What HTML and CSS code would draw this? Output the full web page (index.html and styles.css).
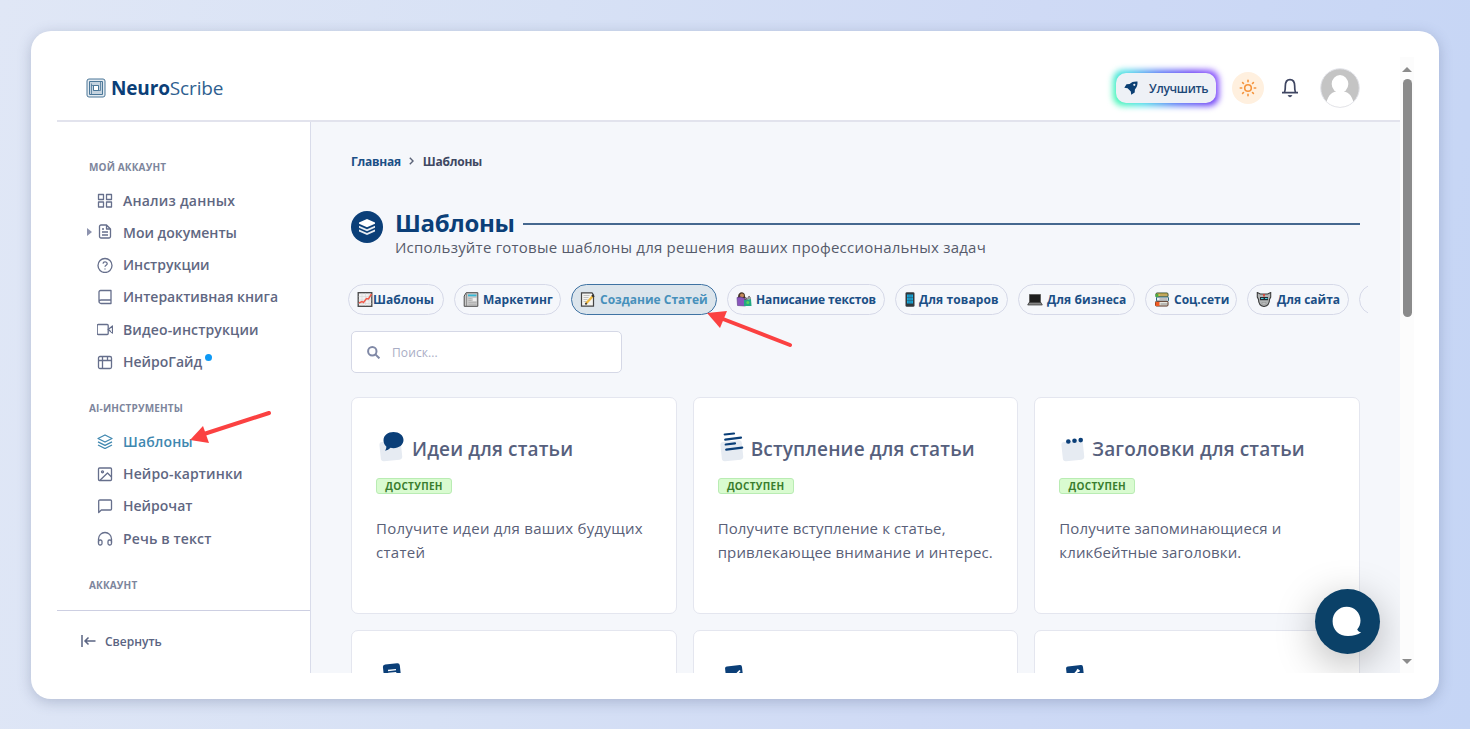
FILE: index.html
```html
<!DOCTYPE html>
<html lang="ru">
<head>
  <meta charset="UTF-8">
  <meta name="viewport" content="width=device-width, initial-scale=1.0">
  <title>NeuroScribe - Шаблоны</title>
  <link rel="stylesheet" href="styles.css">
</head>
<body>
  <div class="window">
    <div class="app">
      <header class="header">
        <div class="logo">
          <svg class="logo-icon" viewBox="0 0 20 20" fill="none" stroke="#4b7798" stroke-width="1">
            <rect x="1" y="1" width="18" height="18" rx="2" fill="#e4ebf1"/>
            <path d="M3.500 3.500h13v13h-13z" fill="#c5d3df"/>
            <path d="M7.500 7.500h5v5h-5z" fill="#fff"/>
            <path d="M5.500 5.500v11M7.500 12.500h7M12.500 7.500h-7M14.500 3.500v9" stroke-width=".8"/>
          </svg>
          <div class="logo-text"><b>Neuro</b>Scribe</div>
        </div>
        <div class="header-actions">
          <button class="upgrade">
            <svg width="14" height="14" viewBox="0 0 14 14" fill="#0b3f73"><path fill-rule="evenodd" d="M13.500.5C10 .3 7.500 1 5.600 3L2.500 3.200.3 6.700l3.300.5 3.200 3.200.4 3.300 3.500-2.200.2-3.100C12.900 6.500 13.700 4 13.500.5zM10.300 2.700a1.100 1.100 0 1 1 0 2.200 1.100 1.100 0 0 1 0-2.200z"/></svg>
            <span>Улучшить</span>
          </button>
          <div class="theme">
            <svg width="18" height="18" viewBox="0 0 18 18" fill="none" stroke="#f5943d" stroke-width="1.600" stroke-linecap="round"><circle cx="9" cy="9" r="3.300"/><path d="M9 1.300v1.400M9 15.300v1.400M1.300 9h1.400M15.300 9h1.400M3.600 3.600l.9.900M13.500 13.500l.9.900M3.600 14.400l.9-.9M13.500 4.500l.9-.9"/></svg>
          </div>
          <svg class="bell" width="18" height="20" viewBox="0 0 18 20" fill="none" stroke="#3f4662" stroke-width="1.700" stroke-linejoin="round"><path d="M1 14.700h16M3.200 14.500c.9-1 1.100-2.300 1.100-6.200C4.300 4 6.200 1.700 9 1.700s4.700 2.300 4.700 6.600c0 3.900.2 5.200 1.100 6.200"/><path d="M7.200 17.500h3.600c-.5 1.700-3.100 1.700-3.600 0z" fill="#3f4662" stroke-width=".8"/></svg>
          <svg class="avatar" width="40" height="40" viewBox="0 0 40 40"><defs><clipPath id="av"><circle cx="20" cy="20" r="19"/></clipPath></defs><circle cx="20" cy="20" r="19.300" fill="#c4c4c4" stroke="#e3e4ea"/><g clip-path="url(#av)" fill="#fff"><ellipse cx="20" cy="16" rx="8.300" ry="9"/><path d="M16 22h8v1.500c5 1 9.500 5 10.500 16.500h-29C6.500 28.500 11 24.500 16 23.500z"/></g></svg>
        </div>
      </header>

      <aside class="sidebar">
        <nav class="menu">
          <div class="menu-title">МОЙ АККАУНТ</div>
          <a class="menu-item"><svg viewBox="0 0 16 16"><path d="M1.500 2.500h5v5h-5zM9.500 2.500h5v5h-5zM1.500 10h5v5h-5zM9.500 10h5v5h-5z"/></svg><span class="wider">Анализ данных</span></a>
          <a class="menu-item"><i class="caret"></i><svg viewBox="0 0 16 16"><path d="M9.500 1H4a1.500 1.500 0 0 0-1.500 1.500v10A1.500 1.500 0 0 0 4 14h8a1.500 1.500 0 0 0 1.500-1.500V5zM9.500 1v4h4M5 5h2M5 8h6M5 11h6"/></svg><span>Мои документы</span></a>
          <a class="menu-item"><svg viewBox="0 0 16 16"><circle cx="8" cy="8.500" r="7"/><path d="M6 6.700c.3-2.500 4.200-2.200 4.200.1 0 1.500-2.200 1.500-2.200 3M8 11.500v1"/></svg><span>Инструкции</span></a>
          <a class="menu-item"><svg viewBox="0 0 16 16"><path d="M3.500 1.500H14v13H4A2 2 0 0 1 2 12.500V3a1.500 1.500 0 0 1 1.500-1.500zM2 12.500a2 2 0 0 1 2-1.500h10"/></svg><span>Интерактивная книга</span></a>
          <a class="menu-item"><svg viewBox="0 0 16 16"><rect x=".2" y="3.500" width="11" height="10" rx="1"/><path d="M11.200 8.500l4.300-3.500v7z"/></svg><span class="wide">Видео-инструкции</span></a>
          <a class="menu-item"><svg viewBox="0 0 16 16"><rect x="1.500" y="2.500" width="13" height="12" rx="1.500"/><path d="M5.500 2.500v12M10.500 2.500v4M1.500 6.500h13"/></svg><span>НейроГайд</span><i class="dot"></i></a>
        </nav>
        <nav class="menu">
          <div class="menu-title">AI-ИНСТРУМЕНТЫ</div>
          <a class="menu-item active"><svg viewBox="0 0 16 16"><path d="M8 2l7 3.500L8 9 1 5.500zM1 8.800l7 3.500 7-3.500M1 12l7 3.500 7-3.500"/></svg><span class="wide">Шаблоны</span></a>
          <a class="menu-item"><svg viewBox="0 0 16 16"><rect x="1.500" y="2" width="13" height="12.500" rx="1"/><circle cx="5.500" cy="5.800" r="1"/><path d="M3 14.300L10.500 7l4 4"/></svg><span class="wide">Нейро-картинки</span></a>
          <a class="menu-item"><svg viewBox="0 0 16 16"><path d="M3 2h10.500a1 1 0 0 1 1 1v8a1 1 0 0 1-1 1H4.300L1.700 14.500V3.200A1.200 1.200 0 0 1 3 2z"/></svg><span>Нейрочат</span></a>
          <a class="menu-item"><svg viewBox="0 0 16 16"><path d="M1.500 12.500V9a6.500 6.500 0 0 1 13 0v3.500"/><rect x="1.500" y="10" width="3.500" height="5" rx="1.500"/><rect x="11" y="10" width="3.500" height="5" rx="1.500"/></svg><span class="wide">Речь в текст</span></a>
        </nav>
        <div class="menu-title">АККАУНТ</div>
        <div class="collapse">
          <svg width="15" height="12" viewBox="0 0 15 12" fill="none" stroke="#5a6482" stroke-width="1.500"><path d="M1 0v12M14.500 6H4M7.500 2.500L4 6l3.500 3.500"/></svg>
          <span>Свернуть</span>
        </div>
      </aside>

      <main class="main">
        <div class="breadcrumbs">
          <a>Главная</a>
          <svg width="5" height="8" viewBox="0 0 5 8" fill="none" stroke="#5b6377" stroke-width="1.400"><path d="M.8.8L4 4 .8 7.200"/></svg>
          <span>Шаблоны</span>
        </div>

        <div class="page-head">
          <div class="page-icon">
            <svg width="18" height="18" viewBox="0 0 18 18" fill="#fff"><path d="M9 1l8 3.500v1.300L9 9.300 1 5.800V4.500z"/><path d="M1 7.800l8 3.500 8-3.500v1.900l-8 3.500-8-3.500zM1 11.600l8 3.500 8-3.500v1.900L9 17l-8-3.500z" opacity=".9"/></svg>
          </div>
          <div class="page-info">
            <div class="page-title"><h1>Шаблоны</h1><div class="line"></div></div>
            <p>Используйте готовые шаблоны для решения ваших профессиональных задач</p>
          </div>
        </div>

        <div class="tabs">
          <div class="tab tab-1"><svg viewBox="0 0 15 15"><rect x=".7" y=".7" width="13.600" height="13.600" fill="#f1f1f1" stroke="#444" stroke-width="1.300"/><path d="M4.500 1v13M8 1v13M11.500 1v13M1 4.500h13M1 8h13M1 11.500h13" stroke="#d0d0d0" stroke-width=".5"/><path d="M1.500 11l3-1.500 1.500 1 3-4 2 .5L14 2" fill="none" stroke="#f05a4a" stroke-width="1.500"/></svg><span>Шаблоны</span></div>
          <div class="tab tab-2"><svg viewBox="0 0 15 15"><path d="M.7 4l2-3.300h11.600v13.600H.7z" fill="#c9c9c9" stroke="#4c4c4c"/><path d="M3 1.500V14" stroke="#777" stroke-width=".7"/><path d="M4.500 2.500h8.500v1.800H4.500z" fill="#35b8d6"/><path d="M5 6.500h3M5 8.500h3M5 10.500h8M5 12.300h8" stroke="#aaa" stroke-width=".7"/><path d="M9.300 6H13v3H9.300z" fill="#eee"/></svg><span>Маркетинг</span></div>
          <div class="tab tab-3 selected"><svg viewBox="0 0 15 15"><path d="M1 .8h10.500L13 3v11.200H1z" fill="#f4f4f0" stroke="#444" stroke-width="1.200"/><path d="M3 3.500h6M3 5.500h5M3 7.500h4M3 9.500h3" stroke="#aaa" stroke-width=".7"/><path d="M5.500 11.500L12.500 4" stroke="#efb83c" stroke-width="2.300"/><path d="M11.500 3l2 2M4.800 12.300l1.500-1" stroke="#333" stroke-width="1.800"/></svg><span>Создание Статей</span></div>
          <div class="tab tab-4"><svg viewBox="0 0 16 15"><path d="M2 5c0-6 7-6 7-1v2H2z" fill="#463425"/><circle cx="6" cy="3.500" r="2" fill="#c48a5a"/><path d="M1 5.500l4-.5 4.500 2V14l-8-.5z" fill="#8956bd" stroke="#56327f" stroke-width=".6"/><path d="M8 8l7-1 .5 7H8z" fill="#23a982"/><path d="M9 8c0-4 1.500-3 2 0M12 7c0-4 2.500-3 2 0" fill="none" stroke="#444"/><circle cx="11.800" cy="10.500" r="1.500" fill="#5ad45a"/></svg><span>Написание текстов</span></div>
          <div class="tab tab-5"><svg viewBox="0 0 10 15"><rect x=".5" y=".2" width="9" height="14.600" rx="1.300" fill="#30373c"/><path d="M2 2.500h6v9H2z" fill="#15a9dc"/><path d="M4 2.500v9M6 2.500v9M2 5.500h6M2 8.500h6" stroke="#28506b" stroke-width=".5"/></svg><span>Для товаров</span></div>
          <div class="tab tab-6"><svg viewBox="0 0 15 15"><path d="M2 2.500h11v8H2z" fill="#1e1e1e" stroke="#606060"/><path d="M1.500 10.500h12l1.300 2.500H.2z" fill="#858585" stroke="#333" stroke-width=".7"/></svg><span>Для бизнеса</span></div>
          <div class="tab tab-7"><svg viewBox="0 0 15 15"><rect x="1.500" y="1" width="12" height="4" rx="1" fill="#f3c64a" stroke="#374f37"/><rect x="2" y="5" width="12" height="4.300" rx="1" fill="#e9edf0" stroke="#25657e"/><rect x="1" y="9.300" width="12.500" height="4.700" rx="1" fill="#e6e6df" stroke="#55301f"/><path d="M1 2h3v3H1z" fill="#4caa43"/><path d="M1 10h4v4H1z" fill="#f15b23"/><path d="M5 3h8M5 7h8M6 12h7" stroke="#777" stroke-width=".8"/></svg><span>Соц.сети</span></div>
          <div class="tab tab-8"><svg viewBox="0 0 15 15"><path d="M.8.500l3 1.500h7.400l3-1.500v4.500l-1.200 2.500c0 4-2 6.500-5.500 7-3.500-.5-5.500-3-5.500-7L.8 5z" fill="#b2b5b5" stroke="#3c3c3c" stroke-width="1.100"/><path d="M3.500 5h8v3.200h-8z" fill="#242a31"/><path d="M4.500 6.500H7M8.500 6.500H11" stroke="#46d0df" stroke-width="1.200"/><path d="M7.500 2v2.500" stroke="#e33b2e" stroke-width="1.600"/><path d="M5.500 10.500h4v1.300h-4z" fill="#eee" stroke="#666" stroke-width=".4"/></svg><span>Для сайта</span></div>
          <div class="tab tab-9"></div>
        </div>

        <div class="search">
          <svg width="13" height="13" viewBox="0 0 13 13" fill="none" stroke="#8089a6" stroke-width="2"><circle cx="5.300" cy="5.300" r="4.200"/><path d="M8.400 8.400l4 4"/></svg>
          <input type="text" placeholder="Поиск...">
        </div>

        <div class="cards">
          <div class="card card-ideas">
            <div class="card-title">
              <svg viewBox="0 0 26 30"><rect x="2" y="9" width="21.500" height="19.500" rx="3" transform="rotate(-6 13 18)" fill="#e6ebf2"/><path d="M15.500 0C21 0 25.500 3.200 25.500 8s-4.500 8.200-10 8.200c-1.100 0-2-.1-3-.4-1.500 1.600-3.300 2.500-5.500 2.900 1-1.200 1.400-2.500 1.300-4.200C6.500 13 5.500 10.700 5.500 8.200 5.500 3.200 10 0 15.500 0z" fill="#0b3f78"/></svg>
              <h2>Идеи для статьи</h2>
            </div>
            <div class="badge">ДОСТУПЕН</div>
            <p>Получите идеи для ваших будущих статей</p>
          </div>
          <div class="card">
            <div class="card-title">
              <svg viewBox="0 0 26 30"><rect x="2" y="9" width="21.500" height="19.500" rx="3" transform="rotate(-6 13 18)" fill="#e6ebf2"/><path d="M5.700 2.500L15 1.500M6.200 7.700l15.800-2M6.700 12.500l9.300-1.200M7.200 17.700l16-2" stroke="#0b3f78" stroke-width="2.200" stroke-linecap="round"/></svg>
              <h2>Вступление для статьи</h2>
            </div>
            <div class="badge">ДОСТУПЕН</div>
            <p>Получите вступление к статье, привлекающее внимание и интерес.</p>
          </div>
          <div class="card">
            <div class="card-title">
              <svg viewBox="0 0 26 30"><rect x="2" y="9" width="21.500" height="19.500" rx="3" transform="rotate(-6 13 18)" fill="#e6ebf2"/><g fill="#0b3f78"><circle cx="8.300" cy="9.500" r="2.300"/><circle cx="14.500" cy="8.800" r="2.300"/><circle cx="20.700" cy="8.100" r="2.300"/></g></svg>
              <h2>Заголовки для статьи</h2>
            </div>
            <div class="badge">ДОСТУПЕН</div>
            <p>Получите запоминающиеся и кликбейтные заголовки.</p>
          </div>
          <div class="card">
            <div class="card-title"><svg viewBox="0 0 26 30"><rect x="7" y="-1" width="17" height="24" rx="2.500" transform="rotate(-6 13 12)" fill="#0b3f78"/><path d="M11 5.500l8-.8M11.300 8.500l8-.8" stroke="#fff" stroke-width="1.300"/></svg></div>
          </div>
          <div class="card">
            <div class="card-title"><svg viewBox="0 0 26 30"><rect x="7" y="1" width="17" height="22" rx="2" transform="rotate(-6 13 12)" fill="#0b3f78"/><path d="M13 10l2 2 6-6.500" stroke="#fff" stroke-width="1.800" fill="none"/></svg></div>
          </div>
          <div class="card">
            <div class="card-title"><svg viewBox="0 0 26 30"><rect x="7" y="1" width="17" height="22" rx="2" transform="rotate(-6 13 12)" fill="#0b3f78"/><path d="M12 12l6-6.500M17 4.500l2.500 2" stroke="#fff" stroke-width="2" fill="none"/></svg></div>
          </div>
        </div>

        <div class="chat">
          <svg width="30" height="31" viewBox="0 0 30 31"><path d="M14.700.7C22.500.7 28.500 6.800 28.500 14.500c0 3.600-1.200 6.500-3.300 8.900.8 1.700 2.100 2.500 4 2.900-3.500 2.500-7.500 3.700-13.200 3.700C7 30 .6 24 .6 15.200.6 7 6.900.7 14.700.7z" fill="#fff"/></svg>
        </div>
      </main>

      <div class="scrollbar">
        <i class="arrow-up"></i>
        <div class="thumb"></div>
        <i class="arrow-down"></i>
      </div>
    </div>
  </div>

  <svg class="pointer pointer-menu" width="84" height="36" viewBox="0 0 84 36"><path d="M81 4L16 25" stroke="#fb4141" stroke-width="4" stroke-linecap="round"/><path d="M2 31L15 17l6 17z" fill="#fb4141"/></svg>
  <svg class="pointer pointer-tab" width="88" height="40" viewBox="0 0 88 40"><path d="M84 36L17 10" stroke="#fb4141" stroke-width="4" stroke-linecap="round"/><path d="M1 4l20-2-7 17z" fill="#fb4141"/></svg>
</body>
</html>
```
FILE: styles.css
```css
* {
  box-sizing: border-box;
}

body {
  margin: 0;
  height: 729px;
  padding: 31px 31px 30px;
  overflow: hidden;
  font-family: "Open Sans", "Noto Sans", sans-serif;
  background: linear-gradient(100deg, #e0e7f6 0%, #d7e1f5 35%, #cfdaf5 65%, #c5d5f5 100%);
}

.window {
  width: 1408px;
  height: 668px;
  padding: 26px;
  background-color: #fff;
  border-radius: 20px;
  box-shadow: 0 3px 14px rgba(60, 75, 115, 0.27);
}

.app {
  display: grid;
  grid-template-columns: 254px 1089px 14px;
  grid-template-rows: 65px 551px;
  width: 1357px;
  height: 616px;
}

/* header */
.header {
  grid-column: 1 / 3;
  display: flex;
  justify-content: space-between;
  align-items: center;
  padding: 0 40px 1px 29px;
  border-bottom: 2px solid #e2e3ed;
}

.logo {
  display: flex;
  align-items: center;
  gap: 5px;
}

.logo-icon {
  width: 20px;
  height: 20px;
}

.logo-text {
  font-size: 19px;
  letter-spacing: -0.15px;
  color: #2f5f90;
}

.logo-text b {
  color: #0b3f78;
}

.header-actions {
  display: flex;
  align-items: center;
}

.upgrade {
  position: relative;
  display: flex;
  align-items: center;
  gap: 11px;
  width: 100px;
  height: 30px;
  padding: 0 0 0 8px;
  border: none;
  border-radius: 9px;
  background-color: #eef1f6;
  color: #1b4776;
  font: 600 12px "Open Sans", sans-serif;
  letter-spacing: -0.3px;
  z-index: 0;
}

/* rainbow glow round the button */
.upgrade::before,
.upgrade::after {
  content: "";
  position: absolute;
  border-radius: 10px;
  z-index: -1;
}

.upgrade::before {
  inset: -3px;
  background: linear-gradient(60deg, #3fffa5 0%, #45dce8 25%, #4f70f5 52%, #683cf5 78%, #955cff 100%);
  filter: blur(3px);
}

.upgrade::after {
  inset: 0;
  background-color: #eef1f6;
}

.theme {
  display: flex;
  align-items: center;
  justify-content: center;
  width: 32px;
  height: 32px;
  margin-left: 16px;
  border-radius: 50%;
  background-color: #fff0df;
}

.bell {
  margin-left: 17px;
}

.avatar {
  margin-left: 21px;
}

/* sidebar */
.sidebar {
  display: flex;
  flex-direction: column;
  padding-top: 37px;
  border-right: 1px solid #d9dcea;
}

.menu {
  margin-bottom: 22.5px;
}

.menu-title {
  height: 16px;
  padding-left: 32px;
  font-size: 10px;
  font-weight: 700;
  line-height: 16px;
  letter-spacing: 0.15px;
  color: #7d859c;
}

.menu .menu-title {
  margin-bottom: 8.9px;
}

.menu-item {
  position: relative;
  display: flex;
  align-items: center;
  height: 32.3px;
  padding-left: 40px;
  font-size: 14px;
  font-weight: 600;
  color: #5f6782;
}

.menu-item svg {
  width: 16px;
  height: 16px;
  margin-right: 10px;
  fill: none;
  stroke: #666f8c;
  stroke-width: 1.3;
  stroke-linejoin: round;
}

.menu-item .wide {
  letter-spacing: 0.13px;
}

.menu-item .wider {
  letter-spacing: 0.22px;
}

.menu-item.active {
  color: #4088b0;
}

.menu-item.active svg {
  stroke: #4088b0;
}

.caret {
  position: absolute;
  left: 30px;
  border-left: 5px solid #8d93ae;
  border-top: 4px solid transparent;
  border-bottom: 4px solid transparent;
}

.dot {
  width: 7px;
  height: 7px;
  margin: -8px 0 0 3px;
  border-radius: 50%;
  background-color: #0d99f5;
}

.collapse {
  display: flex;
  align-items: center;
  gap: 9px;
  height: 63px;
  margin-top: auto;
  padding: 0 0 2px 24px;
  border-top: 1px solid #cdcfe2;
  font-size: 12px;
  font-weight: 600;
  color: #5a6482;
}

/* content */
.main {
  position: relative;
  padding: 29px 40px 0;
  overflow: hidden;
  background-color: #f5f7fb;
}

.breadcrumbs {
  display: flex;
  align-items: center;
  gap: 8.5px;
  height: 20px;
  font-size: 12px;
  font-weight: 700;
  letter-spacing: -0.25px;
  color: #3f4862;
}

.breadcrumbs a {
  color: #1b4f86;
}

.page-head {
  display: flex;
  gap: 12px;
  margin-top: 39px;
}

.page-icon {
  display: flex;
  align-items: center;
  justify-content: center;
  width: 32px;
  height: 32px;
  margin-top: 1px;
  border-radius: 50%;
  background-color: #0b3f78;
}

.page-info {
  flex: 1;
}

.page-title {
  display: flex;
  align-items: center;
  height: 28px;
}

.page-title h1 {
  width: 128px;
  margin: 0;
  padding-bottom: 2px;
  font-size: 24px;
  line-height: 26px;
  letter-spacing: -0.35px;
  color: #0b3f78;
}

.line {
  flex: 1;
  height: 2px;
  background-color: #45688f;
}

.page-info p {
  margin: -1px 0 1px;
  font-size: 15px;
  line-height: 20px;
  letter-spacing: 0.22px;
  color: #555b6b;
  white-space: nowrap;
}

.tabs {
  display: flex;
  gap: 10px;
  height: 31px;
  margin: 26px -8px 0 -3px;
  overflow: hidden;
}

.tab {
  display: flex;
  flex: none;
  align-items: center;
  gap: 4px;
  padding-left: 8px;
  border: 1px solid #d6d9e8;
  border-radius: 16px;
  font-size: 12px;
  font-weight: 700;
  color: #1b4f86;
  white-space: nowrap;
}

.tab svg {
  width: 16px;
  height: 15px;
}

.tab.selected {
  border-color: #3f73a3;
  background-color: #dce5ec;
  color: #4790bb;
}

.tab-1 { width: 96px; gap: 0; }
.tab-2 { width: 107px; }
.tab-3 { width: 146px; }
.tab-4 { width: 158px; letter-spacing: -0.12px; }
.tab-5 { width: 113px; gap: 1px; padding-left: 6px; letter-spacing: 0.1px; }
.tab-6 { width: 117px; letter-spacing: 0.1px; }
.tab-7 { width: 92px; }
.tab-8 { width: 102px; gap: 5px; }
.tab-9 { width: 102px; }

.search {
  display: flex;
  align-items: center;
  gap: 12px;
  width: 271px;
  height: 42px;
  margin-top: 16px;
  padding-left: 15px;
  border: 1px solid #d5d8e6;
  border-radius: 5px;
  background-color: #fff;
}

.search input {
  width: 200px;
  padding: 0;
  border: none;
  outline: none;
  font: 12px "Open Sans", sans-serif;
  letter-spacing: 0.1px;
}

.search input::placeholder {
  color: #a9adc5;
}

.cards {
  display: grid;
  grid-template-columns: repeat(3, 1fr);
  grid-auto-rows: 217px;
  gap: 16px;
  margin-top: 24px;
}

.card {
  padding: 34px 24px 0;
  border: 1px solid #e4e6ef;
  border-radius: 7px;
  background-color: #fff;
}

.card-title {
  display: flex;
  height: 30px;
}

.card-title svg {
  width: 26px;
  height: 30px;
  margin: 0 6px 0 1px;
  overflow: visible;
}

.card-title h2 {
  margin: 0;
  padding-top: 4px;
  font-size: 19px;
  font-weight: 600;
  line-height: 26px;
  letter-spacing: 0.15px;
  color: #56607d;
  white-space: nowrap;
}

.badge {
  width: 76px;
  height: 16px;
  margin-top: 16px;
  border: 1px solid #b9ecb3;
  border-radius: 3px;
  background-color: #d9fbd0;
  font-size: 10px;
  font-weight: 700;
  line-height: 15px;
  letter-spacing: 0.3px;
  text-align: center;
  color: #3a7d2e;
}

.card p {
  margin: 22px 0 0;
  font-size: 15px;
  line-height: 24px;
  letter-spacing: 0.12px;
  color: #596078;
}

.card-ideas .card-title svg {
  margin: 0 8px 0 2px;
}

.card-ideas p {
  letter-spacing: 0.27px;
}

.chat {
  position: absolute;
  right: 20px;
  bottom: 19px;
  display: flex;
  align-items: center;
  justify-content: center;
  width: 65px;
  height: 65px;
  border-radius: 50%;
  background-color: #0b4168;
  box-shadow: 0 10px 40px rgba(0, 0, 0, 0.28);
}

.chat svg {
  margin-right: 2px;
}

/* scrollbar */
.scrollbar {
  grid-column: 3;
  grid-row: 1 / 3;
  display: flex;
  flex-direction: column;
  align-items: center;
  padding: 10px 0 9px;
  background-color: #fcfcfc;
}

.arrow-up {
  border: 5px solid transparent;
  border-top: none;
  border-bottom-color: #8b8b8b;
}

.thumb {
  width: 9px;
  height: 238px;
  margin-top: 7px;
  border-radius: 5px;
  background-color: #8b8b8b;
}

.arrow-down {
  margin-top: auto;
  border: 5px solid transparent;
  border-bottom: none;
  border-top-color: #8b8b8b;
}

/* red pointers over the page */
.pointer {
  position: absolute;
}

.pointer-menu {
  left: 188px;
  top: 409px;
}

.pointer-tab {
  left: 706px;
  top: 309px;
}
```
